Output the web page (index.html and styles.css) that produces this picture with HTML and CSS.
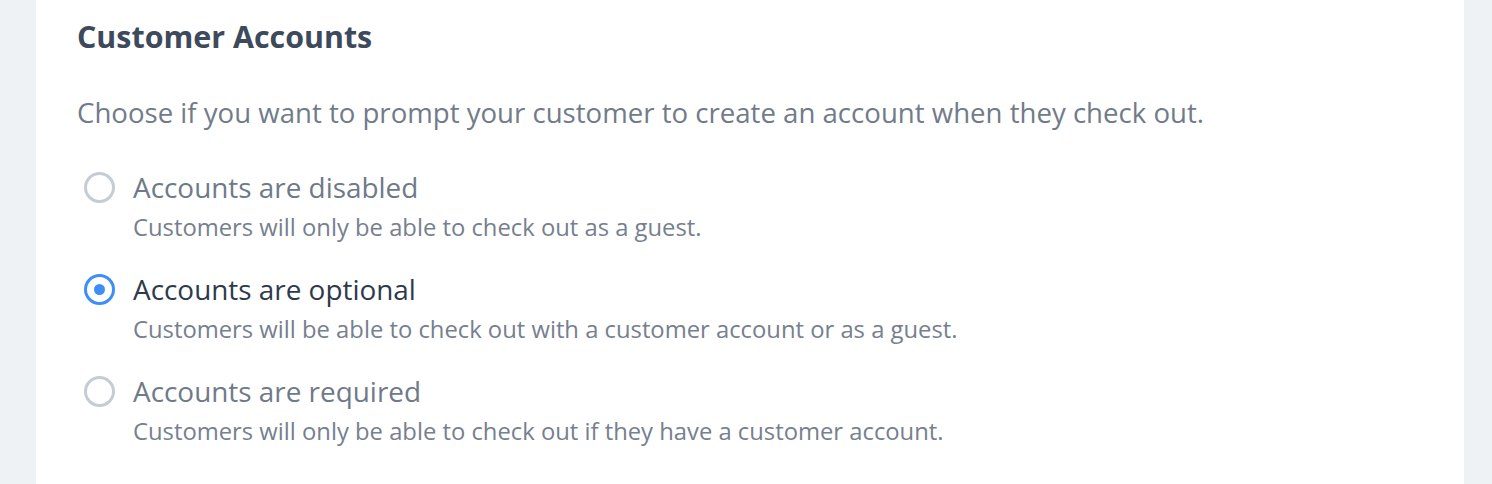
FILE: index.html
```html
<!DOCTYPE html>
<html>
<head>
<meta charset="utf-8">
<link rel="stylesheet" href="styles.css">
</head>
<body>
<div class="page">
  <section class="card">
    <h2 class="title">Customer Accounts</h2>
    <p class="desc">Choose if you want to prompt your customer to create an account when they check out.</p>
    <div class="options">
      <label class="option">
        <span class="radio"></span>
        <span class="text">
          <span class="label">Accounts are disabled</span>
          <span class="sub">Customers will only be able to check out as a guest.</span>
        </span>
      </label>
      <label class="option checked">
        <span class="radio"></span>
        <span class="text">
          <span class="label">Accounts are optional</span>
          <span class="sub">Customers will be able to check out with a customer account or as a guest.</span>
        </span>
      </label>
      <label class="option">
        <span class="radio"></span>
        <span class="text">
          <span class="label">Accounts are required</span>
          <span class="sub">Customers will only be able to check out if they have a customer account.</span>
        </span>
      </label>
    </div>
  </section>
</div>
</body>
</html>
```
FILE: styles.css
```css
html, body {
  margin: 0;
  padding: 0;
  background: #eff2f5;
  height: 100%;
}
body {
  font-family: "Open Sans", "Noto Sans", sans-serif;
}
.page {
  padding: 0 28px 0 36px;
  height: 100%;
}
.card {
  background: #fff;
  height: 100%;
  padding: 17px 41px 0;
  box-sizing: border-box;
}
.title {
  margin: 0;
  font-size: 30.4px;
  font-weight: 700;
  color: #3d4a5b;
  line-height: 40px;
}
.desc {
  margin: 37px 0 0;
  font-size: 27.6px;
  color: #717b89;
  line-height: 36px;
}
.options {
  display: flex;
  flex-direction: column;
  gap: 29px;
  margin-top: 39px;
  padding-left: 7px;
}
.option {
  display: flex;
  align-items: flex-start;
  gap: 18px;
}
.radio {
  width: 31px;
  height: 31px;
  border: 3px solid #c5ccd3;
  border-radius: 50%;
  box-sizing: border-box;
  margin-top: 3px;
  flex: none;
  display: flex;
  align-items: center;
  justify-content: center;
}
.checked .radio {
  border-color: #3e8ef7;
}
.checked .radio::after {
  content: "";
  width: 11px;
  height: 11px;
  border-radius: 50%;
  background: #3e8ef7;
}
.text {
  display: flex;
  flex-direction: column;
}
.label {
  font-size: 27.9px;
  line-height: 36px;
  color: #6f7a89;
}
.checked .label {
  color: #2e3a4b;
}
.sub {
  font-size: 23.8px;
  line-height: 30px;
  color: #76808e;
  margin-top: 7px;
}
```
